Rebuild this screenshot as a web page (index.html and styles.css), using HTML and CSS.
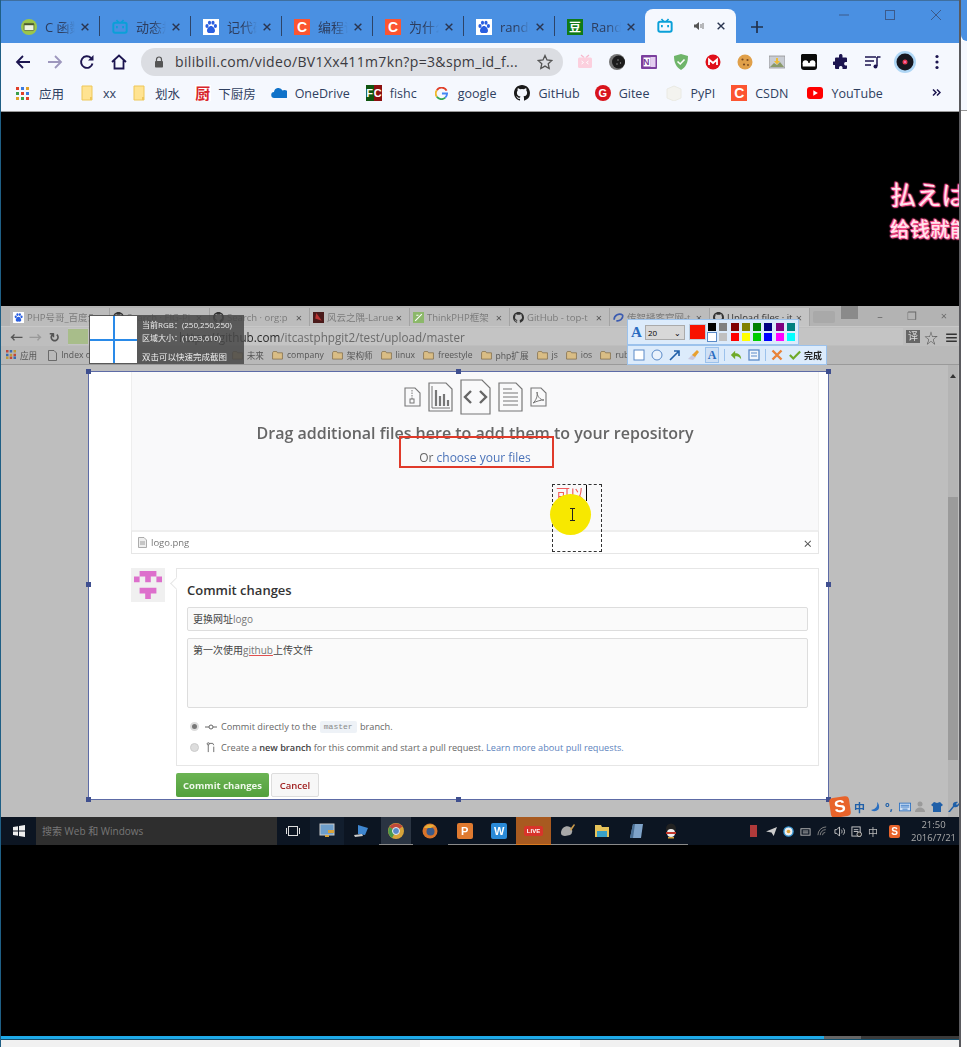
FILE: index.html
```html
<!DOCTYPE html>
<html lang="zh">
<head>
<meta charset="utf-8">
<title>bilibili</title>
<link rel="stylesheet" href="styles.css">
</head>
<body>
<svg class="defs" width="0" height="0">
  <symbol id="x" viewBox="0 0 12 12"><path d="M2 2l8 8M10 2l-8 8" fill="none" stroke="currentColor" stroke-width="1.7"/></symbol>
  <symbol id="tv" viewBox="0 0 18 18"><path d="M5 1l2.5 3M13 1l-2.5 3" stroke="currentColor" stroke-width="1.8" fill="none"/><rect x="1.5" y="4.2" width="15" height="11.3" rx="2" fill="none" stroke="currentColor" stroke-width="2.2"/><path d="M5.5 8v2.500M12.5 8v2.500" stroke="currentColor" stroke-width="2"/></symbol>
  <symbol id="paw" viewBox="0 0 16 16"><rect width="16" height="16" fill="#fff"/><ellipse cx="4" cy="7" rx="1.6" ry="2" fill="#2a5fe0"/><ellipse cx="6.5" cy="3.8" rx="1.6" ry="2" fill="#2a5fe0"/><ellipse cx="10" cy="3.8" rx="1.6" ry="2" fill="#2a5fe0"/><ellipse cx="12.4" cy="7" rx="1.6" ry="2" fill="#2a5fe0"/><path d="M8 7c-2 0-4 2.6-4 4.8C4 14 6 14.400 8 13.900c2 .5 4 .1 4-2.100C12 9.600 10 7 8 7z" fill="#2a5fe0"/></symbol>
  <symbol id="folder" viewBox="0 0 12 16"><path d="M1 1h10v14H1z" fill="#ffe391" stroke="#eec759" stroke-width="1"/><path d="M9 12h2v3H9z" fill="#eec759"/></symbol>
  <symbol id="gh" viewBox="0 0 16 16"><path d="M8 0C3.580 0 0 3.580 0 8c0 3.540 2.290 6.530 5.470 7.590.4.070.55-.17.55-.38v-1.340c-2.230.48-2.700-1.070-2.700-1.070-.36-.92-.89-1.170-.89-1.170-.73-.5.050-.49.050-.49.800.060 1.230.830 1.230.830.710 1.220 1.870.870 2.330.660.070-.520.280-.870.510-1.070-1.780-.200-3.640-.890-3.640-3.950 0-.870.310-1.590.820-2.150-.080-.200-.360-1.020.080-2.120 0 0 .670-.210 2.200.820a7.600 7.600 0 0 1 4 0c1.530-1.040 2.200-.820 2.200-.820.440 1.100.160 1.920.080 2.120.510.560.820 1.270.820 2.150 0 3.070-1.870 3.750-3.650 3.950.290.250.540.730.540 1.480v2.200c0 .210.150.460.550.380A8 8 0 0 0 16 8c0-4.420-3.580-8-8-8z" fill="currentColor"/></symbol>
  <symbol id="cfolder" viewBox="0 0 12 10"><path d="M.5 2V9h11V2H6L5 .5H1.500z" fill="#d9bd85" stroke="#7f6a45" stroke-width=".8"/></symbol>
</svg>

<main class="screen">
  <section class="window">
    <header class="tabstrip">
      <div class="tab"><svg class="fav" viewBox="0 0 18 18"><circle cx="9" cy="9" r="9" fill="#9cc64a"/><rect x="3.500" y="5" width="11" height="8" rx="1" fill="#eef5e0" stroke="#4a5a2a" stroke-width=".8"/><rect x="3.500" y="5" width="11" height="2" fill="#4a5a2a"/></svg><span class="tab-title">C 函数指针</span><svg class="tab-x"><use href="#x"/></svg></div>
      <div class="tab"><svg class="fav fav-blue"><use href="#tv"/></svg><span class="tab-title">动态规划</span><svg class="tab-x"><use href="#x"/></svg></div>
      <div class="tab"><svg class="fav"><use href="#paw"/></svg><span class="tab-title">记代码</span><svg class="tab-x"><use href="#x"/></svg></div>
      <div class="tab"><span class="csdn fav">C</span><span class="tab-title">编程语言</span><svg class="tab-x"><use href="#x"/></svg></div>
      <div class="tab"><span class="csdn fav">C</span><span class="tab-title">为什么要</span><svg class="tab-x"><use href="#x"/></svg></div>
      <div class="tab"><svg class="fav"><use href="#paw"/></svg><span class="tab-title">random</span><svg class="tab-x"><use href="#x"/></svg></div>
      <div class="tab tab-last"><span class="douban fav">豆</span><span class="tab-title">Random</span><svg class="tab-x"><use href="#x"/></svg></div>
      <div class="tab tab-active">
        <svg class="fav fav-blue"><use href="#tv"/></svg>
        <svg class="speaker" viewBox="0 0 10 10"><path d="M0 3.500h2L5 1v8L2 6.500H0z" fill="#555"/><path d="M7 3v4M9 2v6" stroke="#777" stroke-width="1"/></svg>
        <svg class="tab-x"><use href="#x"/></svg>
      </div>
      <svg class="newtab" viewBox="0 0 12 12"><path d="M6 0v12M0 6h12" stroke="#22304a" stroke-width="1.700"/></svg>
      <div class="winctl">
        <svg viewBox="0 0 12 12"><path d="M1 6h10" stroke="#3c5a8a"/></svg>
        <svg viewBox="0 0 12 12"><rect x="1.500" y="1.500" width="9" height="9" fill="none" stroke="#3c5a8a"/></svg>
        <svg viewBox="0 0 12 12"><path d="M1 1l10 10M11 1L1 11" stroke="#3c5a8a" fill="none"/></svg>
      </div>
    </header>

    <nav class="toolbar">
      <button class="nav"><svg viewBox="0 0 16 16"><path d="M15 8H2M8 2L2 8l6 6" fill="none" stroke="#1c1550" stroke-width="1.800"/></svg></button>
      <button class="nav"><svg viewBox="0 0 16 16"><path d="M1 8h13M8 2l6 6-6 6" fill="none" stroke="#9d97bd" stroke-width="1.800"/></svg></button>
      <button class="nav"><svg viewBox="0 0 16 16"><path d="M13.500 9.500A5.800 5.800 0 1 1 12 4" fill="none" stroke="#1c1550" stroke-width="1.900"/><path d="M14.500 1v5.500H9z" fill="#1c1550"/></svg></button>
      <button class="nav"><svg viewBox="0 0 16 16"><path d="M1 8l7-6.500L15 8M3.500 6.500V14.500h9V6.500" fill="none" stroke="#1c1550" stroke-width="1.800"/></svg></button>
      <div class="omnibox">
        <svg class="lock" viewBox="0 0 10 12"><path d="M2.500 5V3.500a2.500 2.500 0 0 1 5 0V5" fill="none" stroke="#555" stroke-width="1.200"/><rect x="1" y="5" width="8" height="6.500" rx=".8" fill="#555"/></svg>
        <span class="url">bilibili.com/video/BV1Xx411m7kn?p=3&amp;spm_id_f...</span>
        <svg class="star" viewBox="0 0 16 16"><path d="M8 1.500l2 4.500 4.800.5-3.600 3.200 1 4.800L8 12.100l-4.200 2.400 1-4.800L1.200 6.500 6 6z" fill="none" stroke="#555" stroke-width="1.300"/></svg>
      </div>
      <div class="exts">
        <span class="ext"><svg viewBox="0 0 16 16"><path d="M4 1l3 2.500M12 1L9 3.500" stroke="#f7b7cc" stroke-width="1.200"/><rect x="1" y="3.500" width="14" height="10.500" rx="1.500" fill="#fcd0de"/><path d="M4.500 7l2 1.500-2 1.500M11.500 7l-2 1.500 2 1.500" stroke="#fff" fill="none"/></svg></span>
        <span class="ext"><svg viewBox="0 0 16 16"><circle cx="8" cy="8" r="8" fill="#777"/><circle cx="9.500" cy="8" r="6.500" fill="#1c1c1c"/><circle cx="9" cy="6" r=".7" fill="#999"/><circle cx="11.500" cy="9" r=".7" fill="#999"/><circle cx="8" cy="10" r=".7" fill="#999"/></svg></span>
        <span class="ext"><svg viewBox="0 0 16 16"><rect x="0" y="1" width="16" height="14" rx="1" fill="#7b3f9e"/><rect x="9.500" y="3" width="5" height="10" fill="#e3cdf0"/><rect x="2.500" y="3.500" width="7" height="9" fill="#fff"/></svg><span class="ext-n">N</span></span>
        <span class="ext"><svg viewBox="0 0 16 16"><path d="M8 0l7 2c0 6.500-2 11-7 14C3 13 1 8.500 1 2z" fill="#6fb56a"/><path d="M4.500 7.500L7.200 10l4.300-4.500" fill="none" stroke="#fff" stroke-width="1.600"/></svg></span>
        <span class="ext"><svg viewBox="0 0 16 16"><circle cx="8" cy="8" r="7.500" fill="#e0101a"/><path d="M4 11V5.500l4 3.500 4-3.500V11" fill="none" stroke="#fff" stroke-width="1.800"/></svg></span>
        <span class="ext"><svg viewBox="0 0 16 16"><circle cx="8" cy="8" r="7.500" fill="#e0a04a"/><circle cx="5.500" cy="5.500" r="1.100" fill="#7a4a20"/><circle cx="10.500" cy="6" r="1.100" fill="#7a4a20"/><circle cx="7" cy="10.500" r="1.100" fill="#7a4a20"/><circle cx="11" cy="11" r=".9" fill="#7a4a20"/></svg></span>
        <span class="ext"><svg viewBox="0 0 16 16"><rect y="2" width="16" height="12" fill="#c9cdd4" stroke="#888" stroke-width=".7"/><path d="M1 13l4-4 3 2 3-3 4 5z" fill="#8a9a6a"/><path d="M7 4h2v3h2L8 10.500 5 7h2z" fill="#eebb33"/></svg></span>
        <span class="ext"><svg viewBox="0 0 16 16"><rect width="16" height="16" rx="3" fill="#0a0a0a"/><circle cx="4.500" cy="9" r="2.800" fill="#fff"/><circle cx="11.500" cy="9" r="2.800" fill="#fff"/><rect x="1.700" y="9" width="12.600" height="3.500" fill="#fff"/><rect x="0" y="0" width="16" height="3" rx="1.500" fill="#0a0a0a"/></svg></span>
        <span class="ext"><svg viewBox="0 0 16 16"><path d="M6 1.500a1.800 1.800 0 0 1 3.500 0V3.500H13a1 1 0 0 1 1 1V8h-1.500a1.800 1.800 0 0 0 0 3.500H14V14a1 1 0 0 1-1 1H9.500v-1.500a1.800 1.800 0 0 0-3.500 0V15H3a1 1 0 0 1-1-1v-3H.5a1.800 1.800 0 0 1 0-3.500H2V4.500a1 1 0 0 1 1-1h3z" fill="#1c1550"/></svg></span>
        <span class="ext"><svg viewBox="0 0 16 16"><path d="M0 3h11M0 7h9M0 11h6" stroke="#1c1550" stroke-width="1.500"/><path d="M12 3v9M12 3h3.500" stroke="#1c1550" stroke-width="1.500" fill="none"/><circle cx="10.500" cy="12.500" r="2" fill="#1c1550"/></svg></span>
        <span class="ext ext-disc"><svg viewBox="0 0 22 22"><circle cx="11" cy="11" r="11" fill="#aed6f5"/><circle cx="11" cy="11" r="8.500" fill="#17171f"/><circle cx="11" cy="11" r="2.500" fill="#e63a50"/><circle cx="11" cy="11" r="1" fill="#f7c"/></svg></span>
        <span class="ext"><svg viewBox="0 0 4 16"><circle cx="2" cy="2.500" r="1.600" fill="#1c1550"/><circle cx="2" cy="8" r="1.600" fill="#1c1550"/><circle cx="2" cy="13.500" r="1.600" fill="#1c1550"/></svg></span>
      </div>
    </nav>

    <nav class="bookmarks">
      <a class="bm"><svg class="bm-i" viewBox="0 0 13 13"><g><rect width="3" height="3" fill="#e0402a"/><rect x="5" width="3" height="3" fill="#3a7ae0"/><rect x="10" width="3" height="3" fill="#e0a02a"/><rect y="5" width="3" height="3" fill="#3aa04a"/><rect x="5" y="5" width="3" height="3" fill="#e0402a"/><rect x="10" y="5" width="3" height="3" fill="#3a7ae0"/><rect y="10" width="3" height="3" fill="#e0a02a"/><rect x="5" y="10" width="3" height="3" fill="#3aa04a"/><rect x="10" y="10" width="3" height="3" fill="#e0402a"/></g></svg>应用</a>
      <a class="bm bm-xx"><svg class="bm-f"><use href="#folder"/></svg>xx</a>
      <a class="bm bm-hs"><svg class="bm-f"><use href="#folder"/></svg>划水</a>
      <a class="bm bm-cf"><span class="chu">厨</span>下厨房</a>
      <a class="bm bm-od"><svg class="bm-i bm-wide" viewBox="0 0 16 11"><path d="M3.500 10.500a3 3 0 0 1-.5-6 4.500 4.500 0 0 1 8.500-1.500 4 4 0 0 1 4 7.500z" fill="#0f72c9"/></svg>OneDrive</a>
      <a class="bm bm-fc"><span class="fc"><i>F</i><b>C</b></span>fishc</a>
      <a class="bm bm-g"><svg class="bm-i" viewBox="0 0 14 14"><path d="M12.500 4A6 6 0 0 0 2 3.500" fill="none" stroke="#e0402a" stroke-width="2"/><path d="M2 3.500a6 6 0 0 0 0 7" fill="none" stroke="#f0b82a" stroke-width="2"/><path d="M2 10.500a6 6 0 0 0 9 1" fill="none" stroke="#34a853" stroke-width="2"/><path d="M11 11.500A6 6 0 0 0 13 7H7.500" fill="none" stroke="#4285f4" stroke-width="2"/></svg>google</a>
      <a class="bm bm-gh"><svg class="bm-i bm-16 ink"><use href="#gh"/></svg>GitHub</a>
      <a class="bm bm-gt"><span class="gitee">G</span>Gitee</a>
      <a class="bm bm-py"><svg class="bm-i bm-16" viewBox="0 0 16 16"><path d="M1 4l7-3 7 3v9l-7 3-7-3z" fill="#f3f3ef" stroke="#eaeae4"/></svg>PyPI</a>
      <a class="bm bm-cs"><span class="csdn bm-16b">C</span>CSDN</a>
      <a class="bm bm-yt"><svg class="bm-i bm-16" viewBox="0 0 16 12"><rect width="16" height="12" rx="3" fill="#f00"/><path d="M6.300 3.300l4.500 2.700-4.500 2.700z" fill="#fff"/></svg>YouTube</a>
      <svg class="bm-more" viewBox="0 0 9 7"><path d="M1 .5L4 3.500 1 6.500M5 .5L8 3.500 5 6.500" fill="none" stroke="#1c1550" stroke-width="1.500"/></svg>
    </nav>

    <section class="video">
      <div class="subs"><p class="sub-jp">払えば</p><p class="sub-cn">给钱就能</p></div>
      <div class="capture">
        <div class="c-tabs">
          <div class="c-tab"><svg class="c-fav"><use href="#paw"/></svg><span>PHP号哥_百度云</span><em>×</em></div>
          <div class="c-tab"><svg class="c-fav ink2"><use href="#gh"/></svg><span>Search · FIG-Pi</span><em>×</em></div>
          <div class="c-tab"><svg class="c-fav ink2"><use href="#gh"/></svg><span>Search · org:p</span><em>×</em></div>
          <div class="c-tab"><svg class="c-fav" viewBox="0 0 10 10"><rect width="10" height="10" fill="#4a1a1a"/><path d="M3 1l5 7-6-2z" fill="#b33"/></svg><span>风云之隅-Laruel</span><em>×</em></div>
          <div class="c-tab"><svg class="c-fav" viewBox="0 0 10 10"><rect width="10" height="10" fill="#8cb86a"/><path d="M2 8l6-6M3 3h2" stroke="#fff"/></svg><span>ThinkPHP框架</span><em>×</em></div>
          <div class="c-tab"><svg class="c-fav ink2"><use href="#gh"/></svg><span>GitHub - top-t</span><em>×</em></div>
          <div class="c-tab"><svg class="c-fav" viewBox="0 0 10 10"><path d="M1 7a5 5 0 0 1 8-4M3 8a5 5 0 0 0 6-5" fill="none" stroke="#3a5ab0" stroke-width="1.500"/></svg><span>传智播客官网-t</span><em>×</em></div>
          <div class="c-tab c-tab-on"><svg class="c-fav ink2"><use href="#gh"/></svg><span>Upload files · it</span><em>×</em></div>
          <i class="c-new"></i>
          <i class="c-user"></i>
          <div class="c-ctl"><span>–</span><span>❐</span><span>×</span></div>
        </div>
        <div class="c-tool">
          <span class="c-nav c-back">←</span><span class="c-nav c-fwd">→</span><span class="c-nav c-rel">↻</span>
          <div class="c-omni"><span class="c-lock"></span><span class="c-url"><b>https://github.com</b>/itcastphpgit2/test/upload/master</span></div>
          <span class="c-tr">译</span><span class="c-star">☆</span><span class="c-menu">≡</span>
        </div>
        <div class="c-book">
          <span class="c-b c-apps"><svg class="c-grid" viewBox="0 0 10 10"><path d="M0 0h2.500v2.500H0zM3.700 6.500h2.500V9H3.700zM7.500 3.700H10v2.500H7.500z" fill="#c0483a"/><path d="M3.700 0h2.500v2.500H3.700zM0 3.700h2.500v2.500H0zM7.500 6.500H10V9H7.500z" fill="#3a6ab0"/><path d="M7.500 0H10v2.500H7.500zM3.700 3.700h2.500v2.500H3.700zM0 6.500h2.500V9H0z" fill="#c09a3a"/></svg>应用</span>
          <span class="c-b c-idx"><svg class="c-doc" viewBox="0 0 9 11"><path d="M.5.500h5.500l2.500 2.500v7.500h-8z" fill="none" stroke="#555" stroke-width=".8"/></svg>Index of</span>
          <span class="c-b c-wl"><svg class="c-fo"><use href="#cfolder"/></svg>未来</span>
          <span class="c-b"><svg class="c-fo"><use href="#cfolder"/></svg>company</span>
          <span class="c-b"><svg class="c-fo"><use href="#cfolder"/></svg>架构师</span>
          <span class="c-b"><svg class="c-fo"><use href="#cfolder"/></svg>linux</span>
          <span class="c-b"><svg class="c-fo"><use href="#cfolder"/></svg>freestyle</span>
          <span class="c-b"><svg class="c-fo"><use href="#cfolder"/></svg>php扩展</span>
          <span class="c-b"><svg class="c-fo"><use href="#cfolder"/></svg>js</span>
          <span class="c-b"><svg class="c-fo"><use href="#cfolder"/></svg>ios</span>
          <span class="c-b"><svg class="c-fo"><use href="#cfolder"/></svg>rubik</span>
        </div>
        <div class="c-page">
          <div class="c-scroll"><i class="c-up"></i><i class="c-thumb"></i></div>

          <div class="selection">
            <div class="drop">
              <div class="doc-icons">
                <svg class="d1" viewBox="0 0 17 20"><path d="M1 1h10l5 5v13H1z" fill="none" stroke="#777" stroke-width="1.100"/><path d="M8 3v9" stroke="#777" stroke-dasharray="1.500 1"/><rect x="6" y="12" width="4" height="4" fill="none" stroke="#777"/></svg>
                <svg class="d2" viewBox="0 0 25 30"><path d="M1 1h17l6 6v22H1z" fill="none" stroke="#777" stroke-width="1.200"/><path d="M4 4v22h18" fill="none" stroke="#777"/><path d="M8 24V8M12 24V14M16 24V12M20 24V18" stroke="#777" stroke-width="2.200"/></svg>
                <svg class="d3" viewBox="0 0 31 36"><path d="M1 1h21l8 8v26H1z" fill="none" stroke="#777" stroke-width="1.200"/><path d="M11 12l-6 6 6 6M20 12l6 6-6 6" fill="none" stroke="#666" stroke-width="2.400"/></svg>
                <svg class="d2" viewBox="0 0 25 30"><path d="M1 1h17l6 6v22H1z" fill="none" stroke="#777" stroke-width="1.200"/><path d="M5 7h9M5 11h15M5 15h15M5 19h15M5 23h15" stroke="#777" stroke-width="1.200"/></svg>
                <svg class="d1" viewBox="0 0 17 20"><path d="M1 1h10l5 5v13H1z" fill="none" stroke="#777" stroke-width="1.100"/><path d="M3 16c3-2 5-8 4-11 0 4 3 8 7 8-3 0-7 1-11 3z" fill="none" stroke="#777"/></svg>
              </div>
              <h2 class="drop-h">Drag additional files here to add them to your repository</h2>
              <p class="drop-or">Or <a>choose your files</a></p>
            </div>
            <div class="file-row">
              <svg class="file-i" viewBox="0 0 9 11"><path d="M.5.500h5.500l2.500 2.500v7.500h-8z" fill="#eee" stroke="#999" stroke-width=".8"/><path d="M2 5h5M2 7h5" stroke="#888" stroke-width=".8"/></svg>
              <span class="file-n">logo.png</span>
              <span class="file-x">×</span>
            </div>
            <div class="commit">
              <div class="avatar"><svg viewBox="0 0 5 5" class="av"><path d="M1 0h3v1H1zM0 1h1v1H0zM2 1h1v1H2zM4 1h1v1H4zM1 3h3v1H1zM2 4h1v1H2z" fill="#dd6fcc"/></svg></div>
              <div class="commit-col">
                <div class="commit-box">
                  <h3 class="commit-h">Commit changes</h3>
                  <div class="field">更换网址<span class="grey">logo</span></div>
                  <div class="area">第一次使用<u>github</u>上传文件</div>
                  <div class="radio radio-1"><i class="dot dot-on"></i><svg class="r-i" viewBox="0 0 12 6"><circle cx="6" cy="3" r="2" fill="none" stroke="#666"/><path d="M0 3h4M8 3h4" stroke="#666"/></svg>Commit directly to the <code>master</code> branch.</div>
                  <div class="radio"><i class="dot"></i><svg class="r-i r-pr" viewBox="0 0 10 12"><path d="M2 3v8M8 5v6" stroke="#666" fill="none"/><path d="M3 1.500h4l1 2" stroke="#666" fill="none"/><circle cx="2" cy="2" r="1.200" fill="none" stroke="#666"/></svg>Create a <b>new branch</b> for this commit and start a pull request. <a>Learn more about pull requests.</a></div>
                </div>
                <div class="actions"><button class="b-ok">Commit changes</button><button class="b-no">Cancel</button></div>
              </div>
            </div>
            <i class="h h-tl"></i><i class="h h-tr"></i><i class="h h-bl"></i><i class="h h-br"></i><i class="h h-tm"></i><i class="h h-bm"></i><i class="h h-ml"></i><i class="h h-mr"></i>
            <i class="redbox"></i>
            <div class="textbox"><span class="typed">可以</span><i class="caret"></i></div>
            <i class="pointer"></i>
            <svg class="ibeam" viewBox="0 0 7 13"><path d="M1 .5h5M3.500.5v12M1 12.500h5" stroke="#222" fill="none"/></svg>
          </div>

          <div class="magnifier">
            <div class="lens"></div>
            <div class="mag-text"><p>当前RGB：(250,250,250)</p><p>区域大小：(1053,610)</p><p class="mag-tip">双击可以快速完成截图</p></div>
          </div>

          <div class="ime">
            <span class="ime-s">S</span><span class="ime-t">中</span>
            <svg viewBox="0 0 12 12"><path d="M8 1c1 4-1 7-6 8 4 3 9 0 8-4 0-2-1-3-2-4z" fill="#2a6fc0"/></svg>
            <span class="ime-p">°,</span>
            <svg viewBox="0 0 14 12"><rect x=".5" y="1.500" width="13" height="9" fill="#cfe0f5" stroke="#2a6fc0"/><path d="M2 4h10M2 6h10M4 8.500h6" stroke="#2a6fc0"/></svg>
            <svg viewBox="0 0 12 12"><circle cx="5" cy="3" r="2.500" fill="#9a9a9a"/><path d="M0 11c0-6 10-6 10 0z" fill="#9a9a9a"/></svg>
            <svg viewBox="0 0 12 12"><path d="M3 1l3 1 3-1 3 3-2 1.500V11H2V5.500L0 4z" fill="#1f5fa8"/></svg>
            <svg viewBox="0 0 12 12"><path d="M1 11l5-6c-1-3 2-5 5-4L9 3l1 1 2-2c.5 3-2 5-5 4l-4 5z" fill="#1f5fa8"/></svg>
          </div>
        </div>

        <div class="taskbar">
          <svg class="win" viewBox="0 0 12 12"><path d="M0 2l5-.7V5.500H0zM6 1.100L12 0v5.500H6zM0 6.500h5v4.200L0 10zM6 6.500h6V12l-6-.9z" fill="#eee"/></svg>
          <div class="search">搜索 Web 和 Windows</div>
          <svg class="tv-view" viewBox="0 0 14 10"><rect x="2.500" y=".5" width="9" height="9" fill="none" stroke="#ddd"/><path d="M.5 2v6M13.500 2v6" stroke="#ddd"/></svg>
          <div class="task tk-d"><svg viewBox="0 0 16 16"><rect x="1" y="1" width="14" height="11" fill="#6d9ecb" stroke="#ccc"/><path d="M9 7h6v3H9zM6 12h4v2H6z" fill="#d9a33a"/></svg></div>
          <div class="task"><svg viewBox="0 0 16 16"><path d="M4 2l10 3-3 7-7-1z" fill="#3f86cf"/><path d="M0 12l8-1 1 2-8 1z" fill="#ccc"/></svg></div>
          <div class="task tk-on tk-u"><svg viewBox="0 0 16 16"><circle cx="8" cy="8" r="8" fill="#d8a43a"/><path d="M8 8L1.500 4A8 8 0 0 1 14.500 3.500z" fill="#c0483a"/><path d="M8 8L4 15A8 8 0 0 1 1.500 4z" fill="#4a9a4a"/><circle cx="8" cy="8" r="3.500" fill="#5a8ac8" stroke="#eee"/></svg></div>
          <div class="task"><svg viewBox="0 0 16 16"><circle cx="8" cy="8" r="7.500" fill="#d9742a"/><circle cx="8.500" cy="8.500" r="4" fill="#3a5a8a"/><path d="M2 5c2-4 8-5 12-1-3-1-4 0-5 1z" fill="#e8b03a"/></svg></div>
          <div class="task tk-u"><span class="tk-sq tk-p">P</span></div>
          <div class="task tk-u"><span class="tk-sq tk-w">W</span></div>
          <div class="task tk-live"><span class="live">LIVE</span></div>
          <div class="task tk-u"><svg viewBox="0 0 16 16"><path d="M1 10c0-5 5-8 9-6 3 2 3 6 0 8-3 1-9 2-9-2z" fill="#a8a8a8"/><path d="M10 6l4-5 1 1-4 6z" fill="#c99a4a"/></svg></div>
          <div class="task tk-u"><svg viewBox="0 0 16 16"><path d="M1 2h6l1 2h7v10H1z" fill="#e6c35a"/><rect x="3" y="8" width="10" height="6" fill="#39a0c6"/></svg></div>
          <div class="task tk-u"><svg viewBox="0 0 16 16"><path d="M4 1h10l-2 14H1z" fill="#7fa3c9"/><path d="M1 15L4 1l2 0-2 14z" fill="#4a6f94"/></svg></div>
          <div class="task tk-u"><svg viewBox="0 0 16 16"><ellipse cx="8" cy="6" rx="5" ry="5.500" fill="#222"/><ellipse cx="8" cy="10" rx="4" ry="4" fill="#eee"/><path d="M3 9h10v2H3z" fill="#c0342a"/><path d="M5 14h6v1.500H5z" fill="#d9a33a"/></svg></div>
          <div class="tray">
            <i class="t-red"></i>
            <svg viewBox="0 0 10 10"><path d="M0 5l10-4-3 8-2-3z" fill="#ccc"/></svg>
            <svg viewBox="0 0 12 12"><circle cx="6" cy="6" r="5" fill="#eee" stroke="#3a9ad8" stroke-width="1.500"/><circle cx="6" cy="6" r="2" fill="#d9a33a"/></svg>
            <svg viewBox="0 0 12 10"><rect x="1" y="2" width="10" height="7" fill="none" stroke="#bbb"/><path d="M3 4.500h6M3 6.500h6" stroke="#bbb"/></svg>
            <svg viewBox="0 0 12 12"><path d="M1 10a9 9 0 0 1 9-9M3.500 10a6 6 0 0 1 6-6M6 10a3 3 0 0 1 3-3" fill="none" stroke="#888"/></svg>
            <svg viewBox="0 0 12 12"><path d="M1 4h2l3-3v10L3 8H1z" fill="none" stroke="#ccc"/><path d="M8 4c1 1 1 3 0 4M10 2.500c2 2 2 5 0 7" fill="none" stroke="#ccc"/></svg>
            <svg viewBox="0 0 12 12"><rect x="1" y="1" width="9" height="10" fill="none" stroke="#ccc"/><path d="M3 4h5M3 6h5" stroke="#ccc"/><circle cx="9" cy="9" r="2.500" fill="#222" stroke="#ccc"/></svg>
            <span class="t-zh">中</span>
            <span class="t-s">S</span>
            <div class="clock"><span>21:50</span><span>2016/7/21</span></div>
          </div>
        </div>

        <!-- screenshot tool palette -->
        <div class="palette">
          <div class="pal-row pal-top">
            <span class="pal-a">A</span>
            <span class="pal-size">20<i>⌄</i></span>
            <span class="pal-big"></span>
            <div class="swatches">
              <i class="s0"></i><i class="s1"></i><i class="s2"></i><i class="s3"></i><i class="s4"></i><i class="s5"></i><i class="s6"></i><i class="s7"></i>
              <i class="s8"></i><i class="s9"></i><i class="s10"></i><i class="s11"></i><i class="s12"></i><i class="s13"></i><i class="s14"></i><i class="s15"></i>
            </div>
          </div>
          <div class="pal-row pal-bot">
            <svg viewBox="0 0 12 12"><rect x="1" y="1" width="10" height="10" fill="#fff" stroke="#5a8ac8"/></svg>
            <svg viewBox="0 0 12 12"><circle cx="6" cy="6" r="5" fill="#eaf2fc" stroke="#5a8ac8"/></svg>
            <svg viewBox="0 0 12 12"><path d="M1 11L10 2M5 2h5v5" fill="none" stroke="#1f5fa8" stroke-width="1.600"/></svg>
            <svg viewBox="0 0 12 12"><path d="M1 10l5-5 3 3-3 3z" fill="#c9c9e0"/><path d="M5 6l5-5 2 2-4 5z" fill="#e8a030"/></svg>
            <span class="pal-on">A</span><i class="pal-sep"></i>
            <svg viewBox="0 0 14 12"><path d="M1 6l5-5v3c4 0 7 2 7 7-2-3-4-3.500-7-3.500V11z" fill="#6faa2a"/></svg>
            <svg viewBox="0 0 12 12"><rect x="1" y="1" width="10" height="10" fill="#f2f6fc" stroke="#5a8ac8" stroke-width="1.300"/><path d="M3 4h6M3 7h6" stroke="#5a8ac8"/></svg>
            <i class="pal-sep"></i>
            <svg viewBox="0 0 12 12"><path d="M1.500 1.500l9 9M10.500 1.500l-9 9" stroke="#e8833a" stroke-width="2.400"/></svg>
            <svg viewBox="0 0 14 12"><path d="M1 6l4 4 8-8" fill="none" stroke="#6faa2a" stroke-width="2.600"/></svg>
            <span class="pal-done">完成</span>
          </div>
        </div>
      </div>
    </section>
    <div class="progress"><i class="p-done"></i><i class="p-buf"></i></div>
    <div class="below"><i></i></div>
  </section>
  <aside class="edge"><div class="edge-top"></div><div class="edge-mid"></div></aside>
</main>
</body>
</html>
```
FILE: styles.css
```css
* { box-sizing: border-box; }
html, body { margin: 0; padding: 0; background: #fff; }
body { width: 967px; height: 1047px; overflow: hidden; font-family: "Open Sans", "Noto Sans CJK SC", sans-serif; }
p, h2, h3 { margin: 0; font-weight: inherit; }
button { border: 0; padding: 0; background: none; font: inherit; }
.defs { position: absolute; }
.screen { display: flex; height: 1047px; }
.window { width: 961px; flex: none; border-left: 1px solid #1f5f85; border-right: 2px solid #5a5a5e; display: flex; flex-direction: column; height: 1047px; }
.edge { flex: 1; display: flex; flex-direction: column; }
.edge-top { height: 41px; background: #4a90e2; border-bottom-left-radius: 8px; }
.edge-mid { height: 70px; background: #f5f8fe; border-bottom: 1px solid #999; }

/* tab strip */
.tabstrip { height: 43px; flex: none; background: #4a90e2; border-top: 1px solid #3f6f9f; display: flex; align-items: flex-end; padding-left: 8px; position: relative; }
.tab { width: 91px; height: 33px; flex: none; display: flex; align-items: center; padding: 0 0 0 12px; position: relative; color: #2d3d5e; font-size: 13px; }
.tab::after { content: ""; position: absolute; right: 0; top: 6px; width: 1px; height: 20px; background: #2d4468; }
.tab-last { width: 90px; }
.tab-last::after, .tab-active::after { display: none; }
.fav { width: 16px; height: 16px; flex: none; }
.fav-blue { color: #0aa0d8; }
.tab-title { width: 30px; margin-left: 8px; white-space: nowrap; overflow: hidden; -webkit-mask-image: linear-gradient(90deg, #000 55%, transparent); mask-image: linear-gradient(90deg, #000 55%, transparent); }
.tab-x { width: 10px; height: 10px; margin-left: 5px; color: #2a3550; flex: none; }
.tab-active { background: #f5f8fe; border-radius: 8px 8px 0 0; margin-left: 0; height: 34px; }
.tab-active .speaker { width: 10px; height: 10px; margin-left: 21px; }
.tab-active .tab-x { margin-left: 12px; }
.csdn { display: inline-flex; align-items: center; justify-content: center; background: #fc5531; color: #fff; font: 700 14px/1 "Liberation Sans", sans-serif; }
.douban { display: inline-flex; align-items: center; justify-content: center; background: #107a17; color: #fff; font: 700 12px/1 "Noto Sans CJK SC", sans-serif; }
.newtab { width: 12px; height: 12px; margin: 0 0 10px 15px; flex: none; }
.winctl { position: absolute; top: 8px; right: 17px; display: flex; gap: 34px; }
.winctl svg { width: 12px; height: 12px; }

/* toolbar */
.toolbar { height: 37px; flex: none; background: #f5f8fe; display: flex; align-items: center; padding-left: 6px; }
.nav { width: 32px; height: 32px; display: flex; align-items: center; justify-content: center; flex: none; }
.nav svg { width: 16px; height: 16px; }
.omnibox { width: 422px; height: 28px; margin-left: 6px; border-radius: 14px; background: #dbdde2; display: flex; align-items: center; padding-left: 13px; flex: none; }
.lock { width: 10px; height: 12px; flex: none; }
.url { margin-left: 11px; font-size: 14px; color: #3a3a40; white-space: nowrap; letter-spacing: .35px; width: 361px; }
.star { width: 16px; height: 16px; margin-left: 1px; flex: none; }
.exts { display: flex; margin-left: 6px; }
.ext { width: 32px; height: 32px; display: flex; align-items: center; justify-content: center; position: relative; }
.ext svg { width: 16px; height: 16px; }
.ext-disc svg { width: 22px; height: 22px; }
.ext-n { position: absolute; left: 10px; top: 9px; font: 700 9px/14px "Liberation Sans", sans-serif; color: #7b3f9e; }

/* bookmarks */
.bookmarks { height: 32px; flex: none; background: #f5f8fe; border-bottom: 1px solid #999; display: flex; align-items: center; padding: 0 0 5px 15px; font-size: 12.500px; color: #2f4060; position: relative; }
.bm { display: flex; align-items: center; gap: 10px; white-space: nowrap; }
.bm-i { width: 13px; height: 13px; flex: none; }
.bm-f { width: 12px; height: 16px; flex: none; }
.bm-16, .bm-wide { width: 16px; height: 16px; }
.ink { color: #1a1a1a; }
.bm-xx { margin-left: 17px; } .bm-hs { margin-left: 17px; } .bm-cf { margin-left: 15px; gap: 7px; }
.bm-od { margin-left: 15px; gap: 8px; } .bm-fc { margin-left: 16px; gap: 8px; } .bm-g { margin-left: 18px; }
.bm-gh { margin-left: 18px; gap: 8px; } .bm-gt { margin-left: 15px; gap: 8px; } .bm-py { margin-left: 17px; gap: 8px; }
.bm-cs { margin-left: 16px; gap: 8px; } .bm-yt { margin-left: 19px; gap: 8px; }
.chu { width: 16px; height: 16px; background: #fff; color: #d8262c; font: 700 15px/16px "Noto Sans CJK SC", sans-serif; }
.fc { display: flex; width: 16px; height: 16px; font: 700 11px/16px "Liberation Sans", sans-serif; color: #fff; }
.fc i { width: 8px; background: #105510; font-style: normal; text-align: center; }
.fc b { width: 8px; background: #8c1010; text-align: center; }
.gitee { width: 16px; height: 16px; border-radius: 50%; background: #d8141c; color: #fff; font: 700 11px/16px "Liberation Sans", sans-serif; text-align: center; }
.bm-16b { width: 16px; height: 16px; }
.bm-more { position: absolute; left: 931px; top: 9px; width: 9px; height: 7px; }

/* video */
.video { height: 924px; flex: none; background: #000; padding-top: 194px; position: relative; overflow: hidden; }
.subs { position: absolute; left: 889px; top: 66px; white-space: nowrap; }
.sub-jp { font: 400 26px/32px "Noto Sans CJK JP", sans-serif; color: #ffe3ec; text-shadow: 0 0 2px #ff4f8f, 0 0 2px #ff4f8f, 1px 1px 1px #ff4f8f, -1px -1px 1px #ff4f8f; }
.sub-cn { font: 500 20px/26px "Noto Sans CJK SC", sans-serif; color: #ffe3ec; text-shadow: 0 0 2px #ff4f8f, 0 0 2px #ff4f8f, 1px 1px 1px #ff4f8f, -1px -1px 1px #ff4f8f; margin-top: 6px; }
.capture { height: 539px; background: #bdbdbd; position: relative; display: flex; flex-direction: column; filter: blur(.35px); }

.c-tabs { height: 20px; flex: none; background: #b3b3b3; display: flex; align-items: flex-end; padding-left: 9px; font-size: 9.500px; color: #7b7b7b; position: relative; }
.c-tab { width: 100px; height: 18px; flex: none; display: flex; align-items: center; gap: 3px; padding: 0 4px 0 3px; background: #bcbcbc; border-right: 1px solid #a3a3a3; }
.c-tab span { width: 66px; white-space: nowrap; overflow: hidden; }
.c-tab em { font-style: normal; font-size: 11px; margin-left: auto; margin-right: 3px; color: #555; }
.c-tab-on { background: #c4c4c4; color: #333; }
.c-fav { width: 11px; height: 11px; flex: none; }
.ink2 { color: #333; }
.c-new { width: 22px; height: 12px; margin: 0 0 3px 3px; background: #a9a9a9; border-radius: 2px; flex: none; }
.c-user { width: 17px; height: 13px; position: absolute; left: 840px; top: 0; background: #8a8a8a; }
.c-ctl { position: absolute; left: 869px; top: 2px; display: flex; gap: 12px; color: #6a6a6a; font-size: 11px; }
.c-ctl span { width: 20px; text-align: center; }
.c-tool { height: 20px; flex: none; background: #bebebe; display: flex; align-items: center; padding-left: 6px; color: #555; font-size: 13px; border-top: 1px solid #c8c8c8; }
.c-nav { font-weight: 700; width: 19px; text-align: center; }
.c-fwd { color: #999; }
.c-omni { width: 836px; height: 17px; margin-left: 4px; background: #c4c4c4; display: flex; align-items: center; }
.c-lock { width: 20px; height: 15px; background: #a8bd8a; flex: none; }
.c-url { margin-left: 91px; font-size: 11.700px; color: #6a6a6a; white-space: nowrap; }
.c-url b { font-weight: 400; color: #2a2a2a; }
.c-tr { font-size: 10px; margin-left: 3px; background: #666; color: #ddd; width: 14px; height: 13px; line-height: 13px; text-align: center; }
.c-star { margin-left: 4px; font-size: 14px; }
.c-menu { margin-left: 6px; font-size: 15px; font-weight: 700; color: #333; }
.c-book { height: 19px; flex: none; background: #b9b9b9; display: flex; align-items: center; padding-left: 5px; font-size: 8.600px; color: #555; gap: 8px; border-bottom: 1px solid #9a9a9a; }
.c-b { display: flex; align-items: center; gap: 4px; white-space: nowrap; }
.c-grid { width: 10px; height: 10px; flex: none; }
.c-doc { width: 9px; height: 11px; flex: none; }
.c-idx { margin-left: 3px; } .c-wl { margin-left: 130px; }
.c-fo { width: 11px; height: 9px; flex: none; }

.c-page { height: 452px; flex: none; position: relative; background: #bebebe; }
.c-scroll { position: absolute; right: 1px; top: 0; bottom: 0; width: 10px; background: #b4b4b4; }
.c-up { display: block; margin: 9px auto 0; width: 0; border: 3px solid transparent; border-bottom: 4px solid #333; border-top: 0; }
.c-thumb { display: block; position: absolute; top: 132px; height: 263px; width: 10px; background: #9b9b9b; }

.selection { position: absolute; left: 87px; top: 6px; width: 741px; height: 429px; background: #fff; border: 1px solid #5d6ba6; padding-left: 42px; }
.drop { width: 688px; height: 158px; background: #f9f9fa; border-left: 1px solid #eee; border-right: 1px solid #eee; padding-top: 6px; text-align: center; color: #666; }
.doc-icons { height: 38px; display: flex; align-items: center; justify-content: center; gap: 7px; }
.d1 { width: 17px; height: 20px; } .d2 { width: 25px; height: 30px; } .d3 { width: 31px; height: 36px; }
.drop-h { font-size: 16px; font-weight: 600; line-height: 22px; margin-top: 6px; }
.drop-or { font-size: 12px; line-height: 17px; margin-top: 5px; }
.drop-or a { color: #4a72b8; }
.file-row { width: 688px; height: 24px; border: 1px solid #e6e6e6; border-top: 2px solid #eee; display: flex; align-items: center; padding: 0 6px; font-size: 9.500px; color: #777; background: #fff; }
.file-i { width: 9px; height: 11px; }
.file-n { margin-left: 4px; }
.file-x { margin-left: auto; font-size: 15px; color: #555; }
.commit { display: flex; margin-top: 14px; }
.avatar { width: 34px; height: 34px; background: #f0f0f0; padding: 3px; flex: none; }
.av { width: 28px; height: 28px; display: block; }
.commit-col { margin-left: 11px; }
.commit-box { width: 643px; height: 198px; border: 1px solid #e6e6e6; padding: 0 10px; position: relative; background: #fff; }
.commit-box::before { content: ""; position: absolute; left: -5px; top: 10px; width: 8px; height: 8px; background: #fff; border-left: 1px solid #e6e6e6; border-bottom: 1px solid #e6e6e6; transform: rotate(45deg); }
.commit-h { font-size: 13px; font-weight: 600; color: #333; line-height: 18px; padding-top: 12px; height: 38px; }
.field { width: 621px; height: 24px; border: 1px solid #ddd; border-radius: 2px; background: #fafafa; font-size: 10px; line-height: 23px; color: #444; padding-left: 5px; }
.grey { color: #777; }
.area { width: 621px; height: 70px; margin-top: 7px; border: 1px solid #ddd; border-radius: 2px; background: #fafafa; font-size: 10px; line-height: 23px; color: #444; padding-left: 5px; }
.area u { color: #777; text-decoration-color: #e05050; }
.radio { display: flex; align-items: center; white-space: pre; font-size: 9.200px; color: #666; height: 21px; }
.radio-1 { margin-top: 8px; }
.dot { width: 9px; height: 9px; border-radius: 50%; background: #ddd; border: 1px solid #ccc; flex: none; margin: 0 6px 0 3px; }
.dot-on { background: #777; border: 2px solid #ddd; }
.r-i { width: 12px; height: 6px; margin-right: 4px; flex: none; }
.r-pr { height: 11px; }
.radio code { font: 8px/12px "Liberation Mono", monospace; background: #eef2f7; color: #888; padding: 0 4px; margin: 0 1px; border-radius: 2px; }
.radio b { font-weight: 600; color: #444; }
.radio a { color: #5d83bd; }
.actions { display: flex; gap: 2px; margin-top: 7px; }
.b-ok { width: 93px; height: 24px; border-radius: 2px; background: linear-gradient(#6cb454, #52a03c); color: #eef8ea; font-size: 9.500px; font-weight: 700; }
.b-no { width: 48px; height: 24px; border: 1px solid #ddd; border-radius: 2px; background: #f7f7f7; color: #a02020; font-size: 9.500px; font-weight: 600; }

.h { position: absolute; width: 5px; height: 5px; background: #3f4f8f; }
.h-tl { left: -3px; top: -3px; } .h-tr { right: -3px; top: -3px; } .h-bl { left: -3px; bottom: -3px; } .h-br { right: -3px; bottom: -3px; }
.h-tm { left: 367px; top: -3px; } .h-bm { left: 367px; bottom: -3px; } .h-ml { left: -3px; top: 210px; } .h-mr { right: -3px; top: 210px; }
.redbox { position: absolute; left: 310px; top: 64px; width: 155px; height: 32px; border: 2px solid #e03a2a; }
.textbox { position: absolute; left: 463px; top: 112px; width: 50px; height: 68px; border: 1px dashed #333; }
.typed { position: absolute; left: 3px; top: 0; font: 14px/16px "Noto Sans CJK SC", sans-serif; color: #f25a5a; }
.caret { position: absolute; left: 33px; top: 0; width: 1px; height: 16px; background: #000; }
.pointer { position: absolute; left: 461px; top: 122px; width: 41px; height: 41px; border-radius: 50%; background: #f7e800; }
.ibeam { position: absolute; left: 480px; top: 136px; width: 7px; height: 13px; }

.magnifier { position: absolute; left: 88px; top: -50px; width: 155px; height: 49px; background: rgba(72,72,72,.86); display: flex; padding: 1px 0 0 1px; color: #eee; font-size: 8px; }
.lens { width: 47px; height: 47px; background: #fff; position: relative; flex: none; }
.lens::before { content: ""; position: absolute; left: 23px; top: 0; bottom: 0; width: 2px; background: #2a8ae8; }
.lens::after { content: ""; position: absolute; top: 23px; left: 0; right: 0; height: 2px; background: #2a8ae8; }
.mag-text { margin-left: 5px; line-height: 13px; padding-top: 2px; white-space: nowrap; }
.mag-text .mag-tip { margin-top: 6px; font-size: 8.500px; }

.ime { position: absolute; left: 829px; bottom: 0; height: 21px; display: flex; align-items: center; gap: 4px; color: #1f5fa8; font-size: 11px; }
.ime svg { width: 12px; height: 12px; flex: none; }
.ime-s { width: 20px; height: 20px; border-radius: 4px; background: #e8632a; color: #fff; font: 700 17px/20px "Liberation Sans", sans-serif; text-align: center; transform: rotate(-8deg); margin-right: 0; }
.ime-t { font-weight: 700; font-family: "Noto Sans CJK SC", sans-serif; }
.ime-p { width: 10px; font-weight: 700; }

.taskbar { height: 28px; flex: none; background: #0c1522; display: flex; align-items: stretch; position: relative; }
.win { width: 12px; height: 12px; margin: 8px 0 0 12px; flex: none; }
.search { width: 241px; margin-left: 11px; background: #2e2e2e; color: #777; font-size: 10px; line-height: 28px; padding-left: 6px; flex: none; }
.tv-view { width: 14px; height: 10px; margin: 9px 10px 0 9px; flex: none; }
.task { width: 34.400px; flex: none; display: flex; align-items: center; justify-content: center; }
.task svg { width: 16px; height: 16px; }
.tk-d { background: #121e2e; }
.tk-u { box-shadow: inset 0 -1px 0 #8a8a8a, inset 2px 0 0 #0c1522, inset -2px 0 0 #0c1522; }
.tk-on { background: #2a3442; }
.tk-sq { width: 16px; height: 16px; border-radius: 2px; color: #fff; font: 700 11px/16px "Liberation Sans", sans-serif; text-align: center; }
.tk-p { background: #e07a30; } .tk-w { background: #2a8ad8; }
.tk-live { background: #a85a20; box-shadow: inset 0 -1px 0 #d97a20; }
.live { background: #d8342a; color: #fff; font: 700 6px/10px "Liberation Sans", sans-serif; padding: 0 3px; border-radius: 2px; }
.tray { position: absolute; left: 749px; top: 0; right: 0; height: 28px; display: flex; align-items: center; gap: 6px; color: #bbb; font-size: 10px; }
.tray svg { width: 11px; height: 11px; flex: none; }
.t-red { width: 7px; height: 12px; background: #b03a3a; margin-right: 3px; }
.t-s { width: 11px; height: 13px; margin-left: 5px; background: #e8632a; color: #fff; font: 700 10px/13px "Liberation Sans", sans-serif; text-align: center; border-radius: 2px; }
.clock { display: flex; flex-direction: column; align-items: center; margin-left: 5px; line-height: 13px; font-size: 9.500px; color: #aaa; }

.palette { position: absolute; left: 626px; top: 13px; display: flex; flex-direction: column; }
.pal-row { background: #dcebfb; border: 1px solid #9cc2ec; display: flex; align-items: center; }
.pal-top { width: 172px; height: 26px; padding-left: 3px; }
.pal-a { font: 700 15px/1 "Liberation Serif", serif; color: #2a6cc0; width: 13px; }
.pal-size { width: 40px; height: 15px; margin-left: 1px; background: #d8d8d8; border: 1px solid #aaa; font-size: 8px; line-height: 13px; padding-left: 2px; display: flex; justify-content: space-between; padding-right: 3px; }
.pal-size i { font-style: normal; }
.pal-big { width: 17px; height: 16px; margin-left: 4px; background: #f81200; border: 1px solid #bcd; }
.swatches { display: grid; grid-template-columns: repeat(8, 8px); gap: 2px 3.300px; margin-left: 2px; }
.swatches i { width: 8px; height: 8px; display: block; }
.s0{background:#000}.s1{background:#808080}.s2{background:#800000}.s3{background:#808000}.s4{background:#008000}.s5{background:#000080}.s6{background:#800080}.s7{background:#008080}
.s8{background:#fff;outline:1px solid #5a8ac8}.s9{background:#c0c0c0}.s10{background:#f00}.s11{background:#ff0}.s12{background:#0c0}.s13{background:#00f}.s14{background:#f0f}.s15{background:#0ff}
.pal-bot { width: 200px; height: 20px; padding-left: 5px; gap: 6px; }
.pal-bot svg { width: 12px; height: 12px; flex: none; }
.pal-on { width: 14px; height: 16px; background: #cfe0f5; border: 1px solid #9cc2ec; font: 700 12px/14px "Liberation Serif", serif; color: #2a6cc0; text-align: center; }
.pal-sep { width: 1px; height: 12px; background: #9cc2ec; margin: 0 -1px; }
.pal-done { font-size: 9px; color: #222; margin-left: -3px; font-weight: 600; }

.progress { height: 3px; flex: none; background: #3a3a3a; display: flex; }
.p-done { width: 823px; background: #1eaae8; }
.p-buf { width: 37px; background: #666; }
.below { flex: 1; background: #f1f1f1; border-top: 1px solid #14506e; padding-left: 419px; }
.below i { display: block; width: 160px; height: 100%; background: #fafafa; }
```
